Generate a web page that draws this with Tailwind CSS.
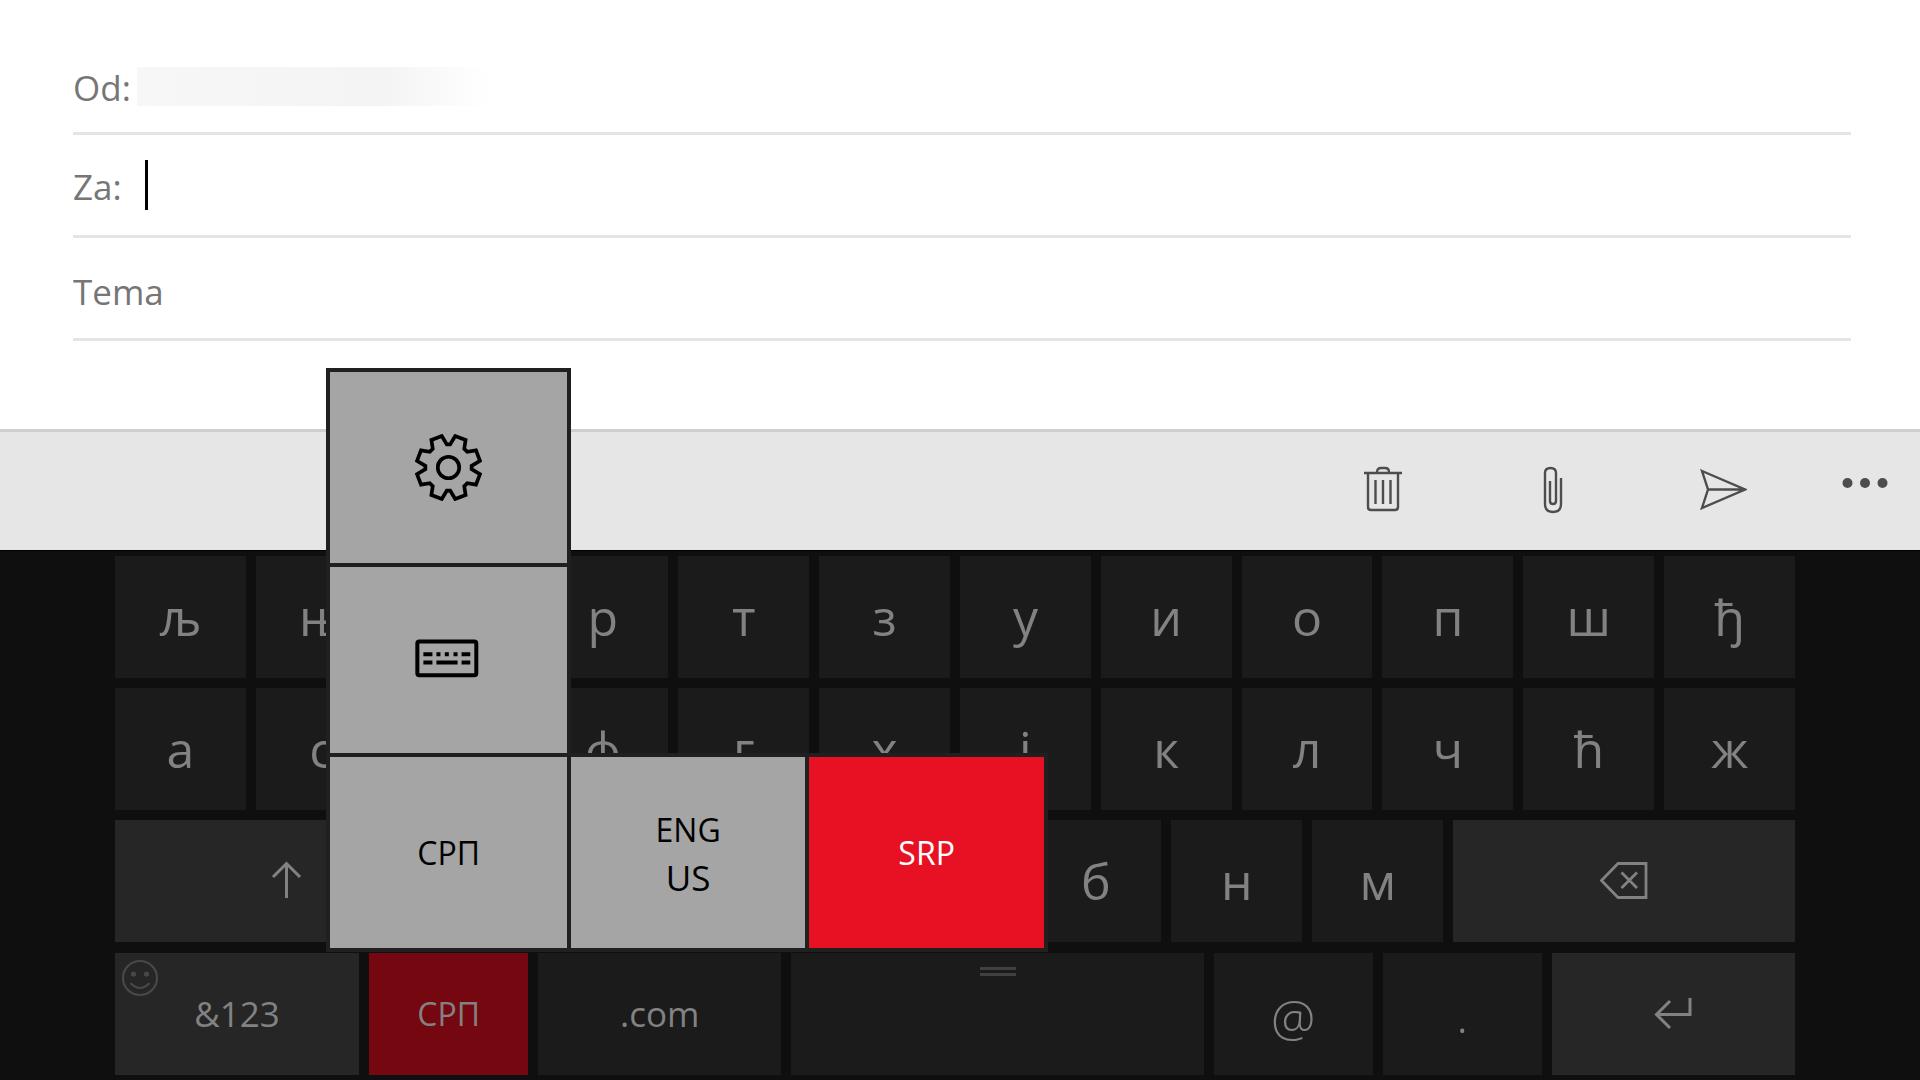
<!DOCTYPE html>
<html lang="sr">
<head>
  <meta charset="UTF-8">
  <meta name="viewport" content="width=device-width, initial-scale=1.0">
  <title>Nova poruka</title>
  <script src="https://cdn.jsdelivr.net/npm/@tailwindcss/browser@4"></script>
</head>
<body class="min-h-screen flex flex-col bg-white font-['Open_Sans','Noto_Sans',sans-serif]">

  <!-- Zaglavlje poruke -->
  <form class="flex-1 pl-[73px] pr-[69px] pt-8 text-[35px] text-[#767676]">
    <div class="flex items-center h-[103px] pt-3 pb-1 border-b-3 border-[#e5e5e5]">
      <label for="from" class="w-16 pt-1">Od:</label>
      <input type="text" id="from" readonly class="w-[352px] h-[39px] outline-none bg-linear-to-r from-[#f7f7f7] via-[#f4f4f4] via-70% to-white">
    </div>
    <div class="flex items-center h-[103px] border-b-3 border-[#e5e5e5]">
      <label for="to" class="w-[72px] pt-1">Za:</label>
      <span class="w-[3px] h-[50px] bg-black"></span>
      <input type="text" id="to" class="flex-1 outline-none caret-transparent">
    </div>
    <div class="flex items-center h-[103px] pt-2 border-b-3 border-[#e5e5e5]">
      <input type="text" id="subject" aria-label="Tema" placeholder="Tema" class="w-full outline-none placeholder:text-[#767676]">
    </div>
  </form>

  <!-- Traka sa komandama -->
  <div class="flex justify-end h-[121px] bg-[#e6e6e6] border-t-3 border-[#cfcfcf] text-[#4d4d4d]">
    <button type="button" aria-label="Obriši" class="w-[170px] flex items-center justify-center pb-[2px]">
      <svg class="w-12 h-12" viewBox="0 0 48 48" fill="none" stroke="currentColor" stroke-width="2.400">
        <path d="M5 7H43M9 7V41Q9 44 12 44H36Q39 44 39 41V7M18 7V6Q18 2 22 2H26Q30 2 30 6V7M16.500 14V38M24 14V38M31.500 14V38"/>
      </svg>
    </button>
    <button type="button" aria-label="Priloži" class="w-[170px] flex items-center justify-center pb-[2px]">
      <svg class="w-12 h-12" viewBox="0 0 48 48" fill="none" stroke="currentColor" stroke-width="2.400">
        <path d="M21 15V35Q21 38 24 38Q27 38 27 35V7Q27 2 21.500 2Q16 2 16 7V38Q16 46 24 46Q32 46 32 38V12"/>
      </svg>
    </button>
    <button type="button" aria-label="Pošalji" class="w-[170px] flex items-center justify-center pb-[2px]">
      <svg class="w-12 h-12" viewBox="0 0 48 48" fill="none" stroke="currentColor" stroke-width="2.400">
        <path d="M3 5L46 23.500L3 42L9 23.500ZM9 23.500H46"/>
      </svg>
    </button>
    <button type="button" aria-label="Još" class="w-28 flex justify-center pt-[46px]">
      <svg class="w-12 h-[10px]" viewBox="0 0 48 10" fill="currentColor">
        <circle cx="7.500" cy="5" r="5"/><circle cx="25" cy="5" r="5"/><circle cx="42.500" cy="5" r="5"/>
      </svg>
    </button>
  </div>

  <!-- Tastatura -->
  <div class="flex flex-col gap-[10px] h-[530px] bg-[#0f0f0f] border-t border-black pt-[5px] pl-[115px] pr-[125px] text-[#828282]">

    <div class="grid grid-cols-12 gap-[10px] h-[122px] text-[50px] [&>button]:bg-[#1b1b1b]">
      <button type="button">љ</button>
      <button type="button">њ</button>
      <button type="button" aria-label="е"></button>
      <button type="button">р</button>
      <button type="button">т</button>
      <button type="button">з</button>
      <button type="button">у</button>
      <button type="button">и</button>
      <button type="button">о</button>
      <button type="button">п</button>
      <button type="button">ш</button>
      <button type="button">ђ</button>
    </div>

    <div class="grid grid-cols-12 gap-[10px] h-[122px] text-[50px] [&>button]:bg-[#1b1b1b]">
      <button type="button">а</button>
      <button type="button">с</button>
      <button type="button" aria-label="д"></button>
      <button type="button">ф</button>
      <button type="button">г</button>
      <button type="button">х</button>
      <button type="button">ј</button>
      <button type="button">к</button>
      <button type="button">л</button>
      <button type="button">ч</button>
      <button type="button">ћ</button>
      <button type="button">ж</button>
    </div>

    <div class="grid grid-cols-[342fr_repeat(7,131fr)_342fr] gap-[10px] h-[122px] text-[50px]">
      <button type="button" aria-label="Shift" class="flex items-center justify-center bg-[#262626]">
        <svg class="w-10 h-10" viewBox="0 0 40 40" fill="none" stroke="currentColor" stroke-width="3">
          <path d="M20.500 37V2M7 16L20.500 2.500L34 16"/>
        </svg>
      </button>
      <button type="button" aria-label="ѕ" class="bg-[#1b1b1b]"></button>
      <button type="button" aria-label="џ" class="bg-[#1b1b1b]"></button>
      <button type="button" aria-label="ц" class="bg-[#1b1b1b]"></button>
      <button type="button" aria-label="в" class="bg-[#1b1b1b]"></button>
      <button type="button" lang="ru" class="bg-[#1b1b1b]">б</button>
      <button type="button" class="bg-[#1b1b1b]">н</button>
      <button type="button" class="bg-[#1b1b1b]">м</button>
      <button type="button" aria-label="Backspace" class="flex items-center justify-center bg-[#262626]">
        <svg class="w-12 h-10" viewBox="0 0 48 40" fill="none" stroke="currentColor" stroke-width="2.800">
          <path d="M18 2.500H46V36.500H18L1.500 19.500ZM21.500 11.500L37 27M37 11.500L21.500 27"/>
        </svg>
      </button>
    </div>

    <div class="grid grid-cols-[244fr_159fr_243fr_412fr_159fr_159fr_243fr] gap-[10px] h-[122px] mt-px text-[35px]">
      <button type="button" class="relative bg-[#262626]">
        <svg class="absolute left-[6px] top-[6px] w-[38px] h-[38px] text-[#484848]" viewBox="0 0 38 38" fill="none" stroke="currentColor" stroke-width="2.200">
          <circle cx="19" cy="19" r="17"/>
          <circle cx="12.500" cy="15" r="1.500" fill="currentColor"/>
          <circle cx="25.500" cy="15" r="1.500" fill="currentColor"/>
          <path d="M9.500 24Q19 34 28.500 24"/>
        </svg>
        &amp;123
      </button>

      <!-- Jezik sa iskačućim menijem -->
      <div class="relative">
        <button type="button" class="w-full h-full bg-[#740710] text-[32px]">СРП</button>
        <div class="absolute -left-[43px] bottom-full mb-px flex flex-col items-start w-max text-[32px] text-black">
          <div class="flex flex-col gap-1 bg-[#202020] p-1 pb-0">
            <button type="button" aria-label="Podešavanja" class="w-[237px] h-[191px] flex items-center justify-center bg-[#a5a5a5]">
              <svg class="w-[67px] h-[67px]" viewBox="-100 -100 200 200" fill="none" stroke="currentColor" stroke-width="11">
                <path d="M5 -69L20 -94L51 -82L47 -56L56 -47L82 -51L94 -20L69 -5V5L94 20L82 51L56 47L47 56L51 82L20 94L5 69H-5L-20 94L-51 82L-47 56L-56 47L-82 51L-94 20L-69 5V-5L-94 -20L-82 -51L-56 -47L-47 -56L-51 -82L-20 -94L-5 -69Z"/>
                <circle r="32"/>
              </svg>
            </button>
            <button type="button" aria-label="Tastatura" class="w-[237px] h-[186px] flex items-center justify-center bg-[#a5a5a5]">
              <svg class="w-[67px] h-[67px]" viewBox="314 830 200 200">
                <rect x="321" y="873" width="176" height="101" rx="6" fill="none" stroke="currentColor" stroke-width="12"/>
                <path d="M339 905h27v12h-27zM378 905h12v12h-12zM403 905h12v12h-12zM429 905h12v12h-12zM453 905h26v12h-26zM339 930h27v12h-27zM378 930h63v12h-63zM453 930h26v12h-26z" fill="currentColor"/>
              </svg>
            </button>
          </div>
          <div class="flex gap-1 bg-[#202020] p-1">
            <button type="button" class="w-[237px] h-[191px] bg-[#a5a5a5]">СРП</button>
            <button type="button" class="w-[234px] h-[191px] pt-1 bg-[#a5a5a5] leading-12">ENG<br><span class="text-[35px] leading-12">US</span></button>
            <button type="button" class="w-[235px] h-[191px] bg-[#e81123] text-white">SRP</button>
          </div>
        </div>
      </div>

      <button type="button" class="bg-[#1b1b1b]">.com</button>
      <button type="button" aria-label="Razmak" class="flex justify-center bg-[#1b1b1b] pt-[14px]">
        <span class="w-9 h-[9px] border-y-3 border-[#404040]"></span>
      </button>
      <button type="button" class="bg-[#1b1b1b] pt-2 text-[50px] font-light">@</button>
      <button type="button" class="bg-[#1b1b1b] text-[50px] font-light">.</button>
      <button type="button" aria-label="Enter" class="flex items-center justify-center bg-[#262626]">
        <svg class="w-10 h-10" viewBox="0 0 40 40" fill="none" stroke="currentColor" stroke-width="3">
          <path d="M37 4V20.500H4M17 7L3.500 20.500L17 34"/>
        </svg>
      </button>
    </div>
  </div>

</body>
</html>
